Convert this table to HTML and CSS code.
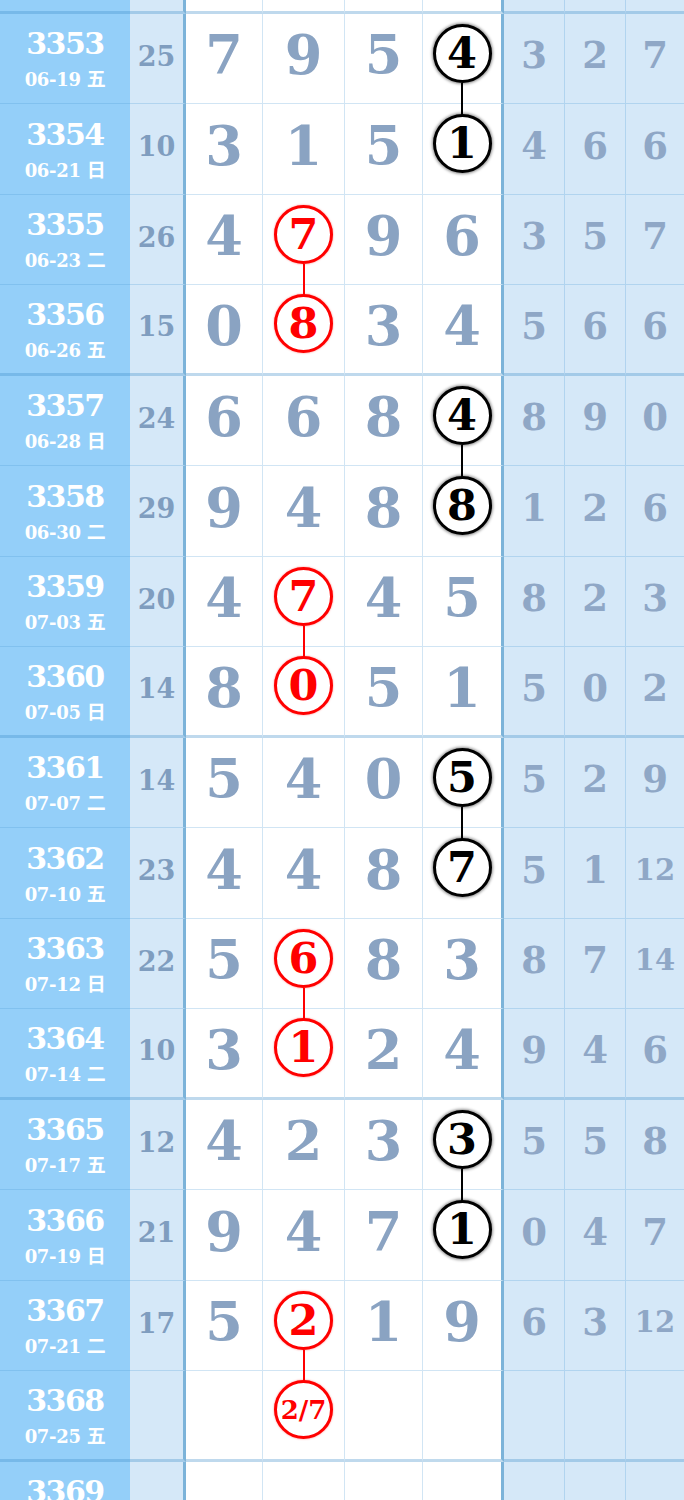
FILE: index.html
```html
<!DOCTYPE html>
<html lang="zh-CN">
<head>
    <meta charset="UTF-8">
    <meta name="viewport" content="width=device-width, initial-scale=1.0">
    <title>走势图</title>
    <link rel="stylesheet" href="styles.css">
</head>
<body>
    <div class="chart" id="chart">
        <!-- 上一期，只露出底边 -->
        <div class="row stub">
            <div class="cell period"></div>
            <div class="cell sum"></div>
            <div class="cell num"></div>
            <div class="cell num"></div>
            <div class="cell num"></div>
            <div class="cell num edge"></div>
            <div class="cell side"></div>
            <div class="cell side"></div>
            <div class="cell side"></div>
        </div>
    </div>

    <script>
        // 期号, 日期, 星期, 和值, 四位号码, 遗漏, 圈号位置, 颜色
        const rows = [
            ['3353', '06-19', '五', '25', ['7', '9', '5', '4'], ['3', '2', '7'], 3, 'black'],
            ['3354', '06-21', '日', '10', ['3', '1', '5', '1'], ['4', '6', '6'], 3, 'black'],
            ['3355', '06-23', '二', '26', ['4', '7', '9', '6'], ['3', '5', '7'], 1, 'red'],
            ['3356', '06-26', '五', '15', ['0', '8', '3', '4'], ['5', '6', '6'], 1, 'red'],
            ['3357', '06-28', '日', '24', ['6', '6', '8', '4'], ['8', '9', '0'], 3, 'black'],
            ['3358', '06-30', '二', '29', ['9', '4', '8', '8'], ['1', '2', '6'], 3, 'black'],
            ['3359', '07-03', '五', '20', ['4', '7', '4', '5'], ['8', '2', '3'], 1, 'red'],
            ['3360', '07-05', '日', '14', ['8', '0', '5', '1'], ['5', '0', '2'], 1, 'red'],
            ['3361', '07-07', '二', '14', ['5', '4', '0', '5'], ['5', '2', '9'], 3, 'black'],
            ['3362', '07-10', '五', '23', ['4', '4', '8', '7'], ['5', '1', '12'], 3, 'black'],
            ['3363', '07-12', '日', '22', ['5', '6', '8', '3'], ['8', '7', '14'], 1, 'red'],
            ['3364', '07-14', '二', '10', ['3', '1', '2', '4'], ['9', '4', '6'], 1, 'red'],
            ['3365', '07-17', '五', '12', ['4', '2', '3', '3'], ['5', '5', '8'], 3, 'black'],
            ['3366', '07-19', '日', '21', ['9', '4', '7', '1'], ['0', '4', '7'], 3, 'black'],
            ['3367', '07-21', '二', '17', ['5', '2', '1', '9'], ['6', '3', '12'], 1, 'red'],
            ['3368', '07-25', '五', '', ['', '2/7', '', ''], ['', '', ''], 1, 'red'],
            ['3369', '07-28', '日', '', ['', '', '', ''], ['', '', ''], -1, '']
        ];

        const chart = document.getElementById('chart');
        rows.forEach((r, i) => {
            const [no, date, week, sum, nums, miss, pos, color] = r;
            const row = document.createElement('div');
            row.className = 'row' + (i % 4 === 3 ? ' group-end' : '');

            let html = `
                <div class="cell period">
                    <span class="no">${no}</span>
                    <span class="date">${date} <span class="week">${week}</span></span>
                </div>
                <div class="cell sum">${sum}</div>`;
            nums.forEach((n, k) => {
                const cls = 'cell num' + (k === 3 ? ' edge' : '');
                if (k === pos) {
                    const link = i % 2 === 0 ? ' link' : '';
                    const small = n.length > 1 ? ' small' : '';
                    html += `<div class="${cls}"><span class="ball ${color}${link}${small}">${n}</span></div>`;
                } else {
                    html += `<div class="${cls}">${n}</div>`;
                }
            });
            miss.forEach(m => {
                html += `<div class="cell side${m.length > 1 ? ' two' : ''}">${m}</div>`;
            });
            row.innerHTML = html;
            chart.appendChild(row);
        });
    </script>
</body>
</html>
```

FILE: styles.css
```css
* {
    margin: 0;
    padding: 0;
    box-sizing: border-box;
}

html, body {
    width: 100%;
    height: 100%;
    overflow: hidden;
    background: #fff;
}

body {
    font-family: "DejaVu Serif", "Noto Sans CJK SC", serif;
}

.chart {
    width: 684px;
}

.row {
    display: grid;
    grid-template-columns: 130px 56px 77px 82px 78px 81px 61px 61px 58px;
    height: 90.5px;
}

.row.stub {
    height: 13.5px;
}

.cell {
    display: flex;
    align-items: center;
    justify-content: center;
    border-bottom: 1px solid rgba(70, 150, 210, 0.25);
    border-right: 1px solid rgba(70, 150, 210, 0.25);
    line-height: 1;
    font-weight: bold;
}

.row.stub .cell,
.row.group-end .cell {
    border-bottom: 3px solid rgba(60, 140, 200, 0.32);
}

.period {
    flex-direction: column;
    background: #94cff9;
    color: #fff;
    border-right: none;
    padding-top: 2px;
}

.period .no {
    font-family: "DejaVu Serif", serif;
    font-size: 30px;
    font-weight: bold;
    letter-spacing: -1.5px;
}

.period .date {
    font-size: 18px;
    margin-top: 9px;
    letter-spacing: -0.3px;
}

.period .week {
    font-family: "Noto Sans CJK SC", sans-serif;
    font-size: 19px;
}

.sum {
    background: #d5e8f8;
    color: #7f9dbf;
    font-size: 27px;
    border-right: 3px solid #7cb3d9;
    padding-bottom: 4px;
}

.num {
    color: #8aa3c2;
    font-size: 54px;
    padding-bottom: 6px;
}

.num.edge {
    border-right: 3px solid #7cb3d9;
}

.side {
    background: #d5e8f8;
    color: #8fa7c6;
    font-size: 37px;
    padding-bottom: 5px;
}

.side:last-child {
    border-right: none;
}

.side.two {
    font-size: 29px;
}

.ball {
    position: relative;
    width: 59px;
    height: 59px;
    border-radius: 50%;
    border: 3px solid #000;
    background: #fff;
    color: #000;
    font-size: 43px;
    font-weight: bold;
    display: flex;
    align-items: center;
    justify-content: center;
    box-shadow: 0 0 3px 1px rgba(0, 0, 0, 0.45);
    margin-bottom: 4px;
}

.ball.red {
    border-color: #f00;
    color: #f00;
    box-shadow: 0 0 2px rgba(255, 0, 0, 0.5);
}

.ball.small {
    font-size: 26px;
}

.ball.link::after {
    content: "";
    position: absolute;
    left: 50%;
    top: calc(100% + 3px);
    width: 2px;
    height: 32px;
    margin-left: -1px;
    background: #000;
}

.ball.red.link::after {
    background: #f00;
}
```
